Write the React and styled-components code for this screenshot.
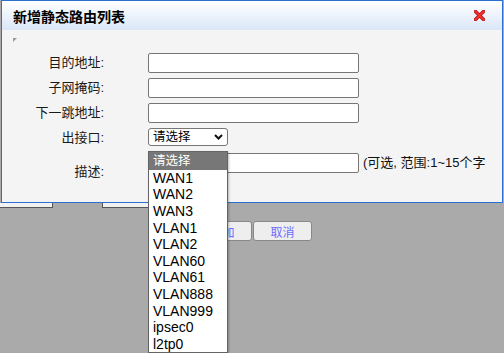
import React from 'react';
import styled, { createGlobalStyle } from 'styled-components';

const GlobalStyle = createGlobalStyle`
    html, body {
        margin: 0;
        padding: 0;
        background: #aaaaaa;
    }
    * {
        box-sizing: border-box;
    }
`

const FONT = `"Liberation Sans", "Noto Sans CJK SC", Arial, sans-serif`

const options = ['WAN1', 'WAN2', 'WAN3', 'VLAN1', 'VLAN2', 'VLAN60', 'VLAN61', 'VLAN888', 'VLAN999', 'ipsec0', 'l2tp0']

export default function App() {
    return (
        <Page>
            <GlobalStyle />
            <Dialog>
                <TitleBar>
                    <Title>新增静态路由列表</Title>
                    <CloseButton aria-label="关闭">
                        <svg width="11" height="11" viewBox="0 0 11 11">
                            <path d="M1.5 1.5 L9.5 9.5 M9.5 1.5 L1.5 9.5" stroke="#b01010" strokeWidth="3.4" strokeLinecap="square" />
                            <path d="M1.5 1.5 L9.5 9.5 M9.5 1.5 L1.5 9.5" stroke="#ee3030" strokeWidth="2" strokeLinecap="square" />
                        </svg>
                    </CloseButton>
                </TitleBar>
                <Body>
                    <Corner>
                        <svg width="4" height="4" viewBox="0 0 4 4">
                            <path d="M0 0 H4 L0 4 Z" fill="#9a9a9a" />
                        </svg>
                    </Corner>
                    <Form>
                        <Label>目的地址:</Label>
                        <TextInput />
                        <span />

                        <Label>子网掩码:</Label>
                        <TextInput />
                        <span />

                        <Label>下一跳地址:</Label>
                        <TextInput />
                        <span />

                        <Label>出接口:</Label>
                        <SelectWrap>
                            <SelectBox>
                                <SelectText>请选择</SelectText>
                                <svg width="9" height="6" viewBox="0 0 9 6">
                                    <path d="M1 1 L4.5 4.5 L8 1" fill="none" stroke="#111" strokeWidth="2" />
                                </svg>
                            </SelectBox>
                            <OptionList>
                                <Option $active><SelectText>请选择</SelectText></Option>
                                {options.map(o => <Option key={o}>{o}</Option>)}
                            </OptionList>
                        </SelectWrap>
                        <span />

                        <Label $low>描述:</Label>
                        <TextInput />
                        <Hint>(可选, 范围:1~15个字</Hint>
                    </Form>
                </Body>
            </Dialog>
            <BehindRow>
                <BehindCell $w={53} $side="right" />
                <BehindGap />
                <BehindCell $w={60} $side="left" />
            </BehindRow>
            <ButtonRow>
                <Button>添加</Button>
                <Button>取消</Button>
            </ButtonRow>
        </Page>
    )
}

const Page = styled.div`
    position: relative;
    width: 504px;
    height: 353px;
    overflow: hidden;
    background: #aaaaaa;
    font-family: ${FONT};
`

const Dialog = styled.div`
    margin-left: 1px;
    width: 502px;
    height: 203px;
    border: 1px solid #2a6fd2;
    background: #f4f4f4;
    display: flex;
    flex-direction: column;
`

const TitleBar = styled.div`
    height: 29px;
    display: flex;
    align-items: center;
    justify-content: space-between;
    padding: 0 17px 0 11px;
    background: linear-gradient(to bottom, #ffffff 0%, #eef4fc 45%, #dae7f7 100%);
`

const Title = styled.h1`
    margin: 0;
    font-size: 14px;
    font-weight: bold;
    color: #000;
    letter-spacing: 0;
`

const CloseButton = styled.span`
    display: flex;
    width: 11px;
    height: 11px;
    cursor: pointer;
`

const Body = styled.div`
    flex: 1;
    padding-top: 8px;
`

const Corner = styled.div`
    display: flex;
    margin-left: 11px;
    height: 4px;
`

const Form = styled.div`
    margin-top: 11px;
    display: grid;
    grid-template-columns: 146px 211px 1fr;
    row-gap: 5px;
    align-items: center;
`

const Label = styled.label`
    padding-right: 44px;
    text-align: right;
    font-size: 13px;
    line-height: 20px;
    color: #1a1a1a;
    white-space: nowrap;
    align-self: ${p => p.$low ? 'start' : 'center'};
    margin-top: ${p => p.$low ? '9px' : '0'};
`

const TextInput = styled.input`
    width: 211px;
    height: 20px;
    margin: 0;
    border: 1px solid #767676;
    border-radius: 2px;
    background: #fff;
    font-family: ${FONT};
    font-size: 13px;
    padding: 1px 3px;
    align-self: start;
`

const SelectWrap = styled.div`
    position: relative;
    width: 80px;
    height: 18px;
    align-self: start;
`

const SelectBox = styled.div`
    height: 18px;
    display: flex;
    align-items: center;
    justify-content: space-between;
    padding: 0 4px 0 4px;
    border: 1px solid #767676;
    border-radius: 3px;
    background: #fff;
    color: #000;
`

const SelectText = styled.span`
    font-size: 12.5px;
    line-height: 1;
`

const OptionList = styled.ul`
    position: absolute;
    top: 23px;
    left: 0;
    z-index: 5;
    width: 80px;
    margin: 0;
    padding: 0;
    list-style: none;
    background: #fff;
    border: 1px solid #646464;
    box-shadow: 1px 1px 2px rgba(0, 0, 0, 0.25);
`

const Option = styled.li`
    height: ${p => p.$active ? '17.5px' : '16.6px'};
    display: flex;
    align-items: center;
    padding-left: 4px;
    font-size: 14px;
    color: ${p => p.$active ? '#fff' : '#000'};
    background: ${p => p.$active ? '#777777' : '#fff'};
    white-space: nowrap;
`

const Hint = styled.span`
    padding-left: 4px;
    font-size: 13px;
    color: #111;
    white-space: nowrap;
    align-self: start;
    line-height: 20px;
`

const BehindRow = styled.div`
    display: flex;
    height: 5px;
`

const BehindCell = styled.div`
    width: ${p => p.$w}px;
    background: #f2f2f2;
    border-bottom: 1px solid #555;
    border-${p => p.$side}: 1px solid #555;
`

const BehindGap = styled.div`
    width: 49px;
`

const ButtonRow = styled.div`
    display: flex;
    gap: 1px;
    padding-left: 193px;
    margin-top: 13px;
`

const Button = styled.button`
    width: 59px;
    height: 20px;
    margin: 0;
    padding: 0;
    border: 1px solid #888;
    border-radius: 3px;
    background: #eeeeee;
    color: #6c6cff;
    font-family: ${FONT};
    font-size: 12px;
    cursor: pointer;
`
